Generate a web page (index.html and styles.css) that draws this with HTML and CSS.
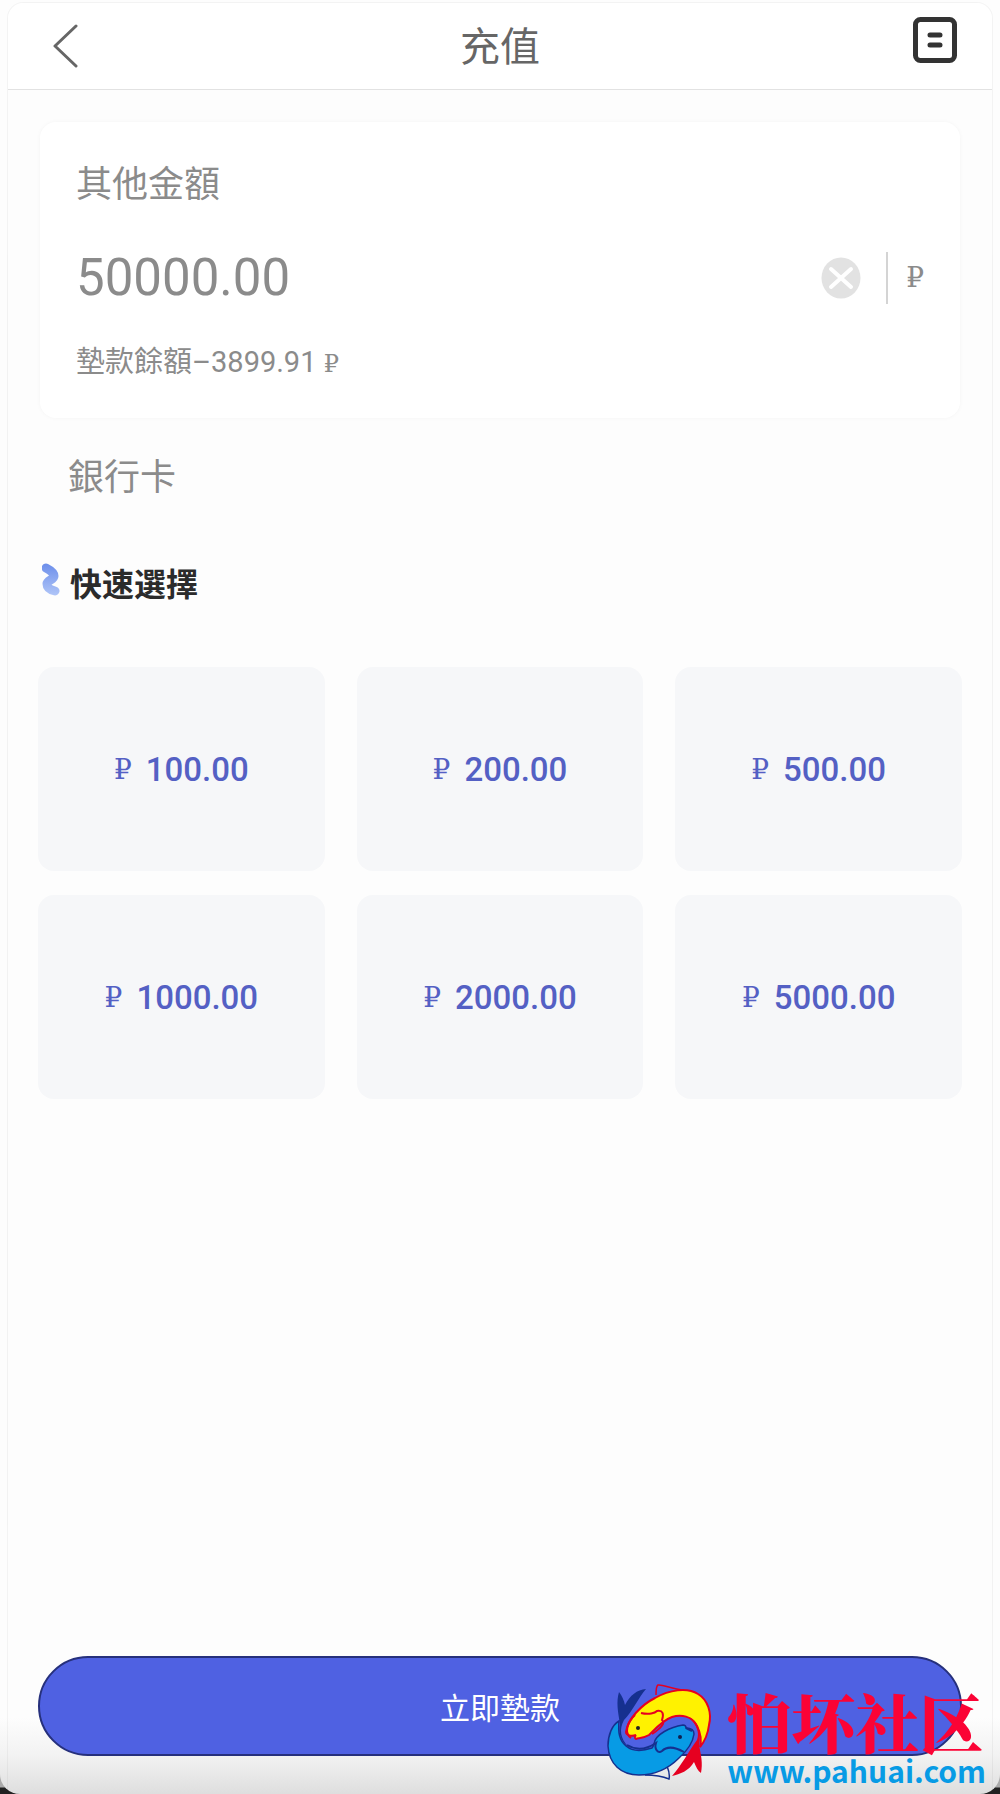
FILE: index.html
```html
<!DOCTYPE html>
<html lang="zh">
<head>
    <meta charset="UTF-8">
    <meta name="viewport" content="width=device-width, initial-scale=1.0">
    <title>充值</title>
    <link rel="stylesheet" href="styles.css">
</head>
<body>
    <div class="window">
        <div class="page">
            <header class="header">
                <button class="icon-btn" type="button" aria-label="返回">
                    <svg width="26" height="46" viewBox="0 0 26 46" fill="none" stroke="#666" stroke-width="3" stroke-linecap="round" stroke-linejoin="round">
                        <path d="M24 3L3 23l21 20"/>
                    </svg>
                </button>
                <h1 class="title">充值</h1>
                <button class="icon-btn icon-btn-bill" type="button" aria-label="記錄">
                    <svg width="44" height="46" viewBox="0 0 44 46" fill="none" stroke="#333" stroke-width="5" stroke-linecap="round">
                        <rect x="2.5" y="2.5" width="39" height="41" rx="5"/>
                        <path d="M17 18h10M17 28h10"/>
                    </svg>
                </button>
            </header>

            <main class="main">
                <!-- Сумма -->
                <section class="card">
                    <label class="card-label" for="amount">其他金額</label>
                    <div class="amount-row">
                        <input class="amount" id="amount" type="text" inputmode="decimal" value="50000.00">
                        <button class="clear" id="clear" type="button" aria-label="清除">
                            <svg width="40" height="42" viewBox="0 0 40 42">
                                <ellipse cx="20" cy="21" rx="19.5" ry="20.5" fill="#e2e2e2"/>
                                <path d="M10 12l20 18M30 12L10 30" stroke="#fff" stroke-width="4" stroke-linecap="round"/>
                            </svg>
                        </button>
                        <span class="rub currency">₽</span>
                    </div>
                    <div class="balance">墊款餘額–3899.91 <span class="rub">₽</span></div>
                </section>

                <div class="method">銀行卡</div>

                <!-- Быстрый выбор -->
                <h2 class="quick-title">
                    <svg class="quick-icon" width="18" height="34" viewBox="0 0 18 34" fill="none">
                        <defs>
                            <linearGradient id="wave" x1="0" y1="0" x2="0" y2="34" gradientUnits="userSpaceOnUse">
                                <stop offset="0" stop-color="#6b8dea"/>
                                <stop offset="1" stop-color="#b3c8f8"/>
                            </linearGradient>
                        </defs>
                        <path d="M4 5C8 7 12 10 12 13C12 17 5 17 5 21C5 25 9 27 13 28" stroke="url(#wave)" stroke-width="9" stroke-linecap="round"/>
                    </svg>
                    快速選擇
                </h2>
                <div class="quick-grid">
                    <button class="quick" type="button" data-value="100.00"><span class="rub">₽</span>100.00</button>
                    <button class="quick" type="button" data-value="200.00"><span class="rub">₽</span>200.00</button>
                    <button class="quick" type="button" data-value="500.00"><span class="rub">₽</span>500.00</button>
                    <button class="quick" type="button" data-value="1000.00"><span class="rub">₽</span>1000.00</button>
                    <button class="quick" type="button" data-value="2000.00"><span class="rub">₽</span>2000.00</button>
                    <button class="quick" type="button" data-value="5000.00"><span class="rub">₽</span>5000.00</button>
                </div>
            </main>

            <footer class="footer">
                <button class="submit" type="button">立即墊款</button>
            </footer>
        </div>

        <div class="watermark">
            <svg class="fish" width="108" height="100" viewBox="0 0 108 100">
                <!-- синяя рыба -->
                <path d="M38 93c8 0 17 1 24 4c1-4 0-8-2-13" fill="none" stroke="#15308f" stroke-width="1.5"/>
                <path d="M12 39C5 43 1 53 1 64C2 82 14 93 32 93C48 93 62 86 72 76C81 68 86 60 87 52C87 48 84 46 79 46C79 44 78 43 76 43C64 45 48 52 47 62C46 65 46 65 45 66C36 69 26 70 19 64C12 58 11 50 12 39z" fill="#079be5" stroke="#15308f" stroke-width="1.5"/>
                <path d="M13 42C11 30 9 20 12 10C15 14 17 18 18 23C23 13 30 8 39 7C32 15 25 30 17 38C12 47 13 57 22 65C15 62 11 52 13 42z" fill="#15308f"/>
                <path d="M20 63C30 69 40 67 49 61C47 67 51 72 55 69C60 64 68 65 77 70M79 46l6 3" fill="none" stroke="#15308f" stroke-width="2"/>
                <circle cx="73" cy="55" r="2" fill="#102050"/>
                <!-- красная рыба -->
                <path d="M49 13C49 8 49 4 51 3C55 2 65 7 77 8" fill="none" stroke="#e60020" stroke-width="1.5"/>
                <path d="M19 50C21 37 34 23 48 16C62 8 80 5 91 12C101 18 105 31 102 43C101 51 98 59 93 65C95 57 93 50 90 44C85 34 74 32 65 35C56 38 49 46 42 53C37 56 33 56 29 57C27 56 28 54 29 53C24 55 19 53 19 50z" fill="#fff200" stroke="#e60020" stroke-width="2"/>
                <path d="M34 31C42 33 48 31 50 29C56 28 57 32 55 38C59 41 53 47 45 52M28 33C20 40 17 51 24 56" fill="none" stroke="#e60020" stroke-width="2"/>
                <path d="M82 35C90 38 95 48 92 63C94 73 96 81 94 91C91 89 89 85 87 80C82 89 73 92 65 94C74 84 82 69 90 58C93 50 89 42 82 35z" fill="#e60020"/>
                <circle cx="31" cy="46" r="2" fill="#222"/>
            </svg>
            <div class="watermark-text">
                <span class="watermark-name">怕坏社区</span>
                <span class="watermark-url">www.pahuai.com</span>
            </div>
        </div>
    </div>

    <script>
        const amount = document.getElementById('amount');

        document.getElementById('clear').addEventListener('click', () => {
            amount.value = '';
            amount.focus();
        });

        document.querySelectorAll('.quick').forEach(btn => {
            btn.addEventListener('click', () => {
                amount.value = btn.dataset.value;
            });
        });
    </script>
</body>
</html>
```
FILE: styles.css
```css
* {
    box-sizing: border-box;
}

body {
    font-family: Roboto, "Noto Sans CJK SC", sans-serif;
    margin: 0;
    color: #8b8b8b;
    background: linear-gradient(to top, #222 6px, #aaa 7px);
}

button {
    font-family: inherit;
    border: none;
    padding: 0;
    background: none;
    cursor: pointer;
}

svg {
    display: block;
}

.window {
    position: relative;
    min-height: 100vh;
    display: flex;
    flex-direction: column;
    padding: 2px 7px 0;
    background: linear-gradient(to top, #dedede, #f2f2f2 38px, #fdfdfd 76px);
    border-radius: 0 0 20px 20px;
    overflow: hidden;
}

.page {
    flex: 1;
    display: flex;
    flex-direction: column;
    border: 1px solid rgba(0, 0, 0, 0.04);
    border-bottom: none;
    border-radius: 16px 16px 0 0;
}

.header {
    display: flex;
    align-items: center;
    justify-content: space-between;
    height: 87px;
    padding: 0 34px;
    background: #fff;
    border-bottom: 1px solid #e2e2e2;
    border-radius: 16px 16px 0 0;
}

.icon-btn {
    display: flex;
    justify-content: center;
    width: 46px;
}

.icon-btn-bill {
    padding-bottom: 12px;
}

.title {
    margin: 0;
    padding-top: 4px;
    font-size: 40px;
    font-weight: 400;
    line-height: 56px;
    color: #666;
}

.main {
    flex: 1;
}

.card {
    margin: 32px 32px 0;
    padding: 38px 36px 34px;
    background: #fff;
    border-radius: 16px;
    box-shadow: 0 0 4px rgba(0, 0, 0, 0.04);
}

.card-label {
    display: block;
    font-size: 36px;
    line-height: 50px;
}

.amount-row {
    display: flex;
    align-items: center;
    height: 52px;
    margin: 42px 0 38px;
}

.amount {
    flex: 1;
    min-width: 0;
    padding: 0;
    border: none;
    outline: none;
    background: none;
    font-family: inherit;
    font-size: 51px;
    line-height: 52px;
    color: inherit;
}

.clear {
    margin-right: 25px;
}

.rub {
    font-family: "DejaVu Serif", serif;
    font-size: 24px;
}

.currency {
    padding-left: 18px;
    border-left: 2px solid #d4d4d4;
    font-size: 28px;
    line-height: 52px;
}

.balance {
    font-size: 29px;
    line-height: 40px;
}

.method {
    margin: 35px 60px 0;
    font-size: 36px;
    line-height: 50px;
}

.quick-title {
    display: flex;
    align-items: center;
    gap: 10px;
    margin: 58px 34px;
    font-size: 32px;
    line-height: 48px;
    color: #2b2b2b;
}

.quick-icon {
    margin-bottom: 10px;
}

.quick-grid {
    display: grid;
    grid-template-columns: repeat(3, 1fr);
    gap: 24px 32px;
    margin: 0 30px;
}

.quick {
    display: flex;
    align-items: center;
    justify-content: center;
    gap: 14px;
    height: 204px;
    background: #f6f7f9;
    border-radius: 16px;
    font-size: 33px;
    font-weight: 500;
    color: #5460c4;
}

.quick .rub {
    font-size: 28px;
}

.footer {
    padding: 32px 30px 38px;
}

.submit {
    width: 100%;
    height: 100px;
    background: #4f61e2;
    border: 2px solid #26307c;
    border-radius: 50px;
    font-size: 30px;
    color: #fff;
}

/* Логотип поверх страницы */
.watermark {
    position: absolute;
    right: 14px;
    bottom: 6px;
    display: flex;
    align-items: flex-end;
    gap: 12px;
    pointer-events: none;
}

.fish {
    margin-bottom: 6px;
}

.watermark-text {
    display: flex;
    flex-direction: column;
}

.watermark-name {
    font-family: "Noto Serif CJK SC", "Noto Sans CJK SC", serif;
    font-size: 64px;
    font-weight: 900;
    line-height: 64px;
    color: #fb0335;
}

.watermark-url {
    font-family: "Noto Sans CJK SC", sans-serif;
    font-size: 30px;
    font-weight: 700;
    line-height: 36px;
    color: #079be5;
}
```
